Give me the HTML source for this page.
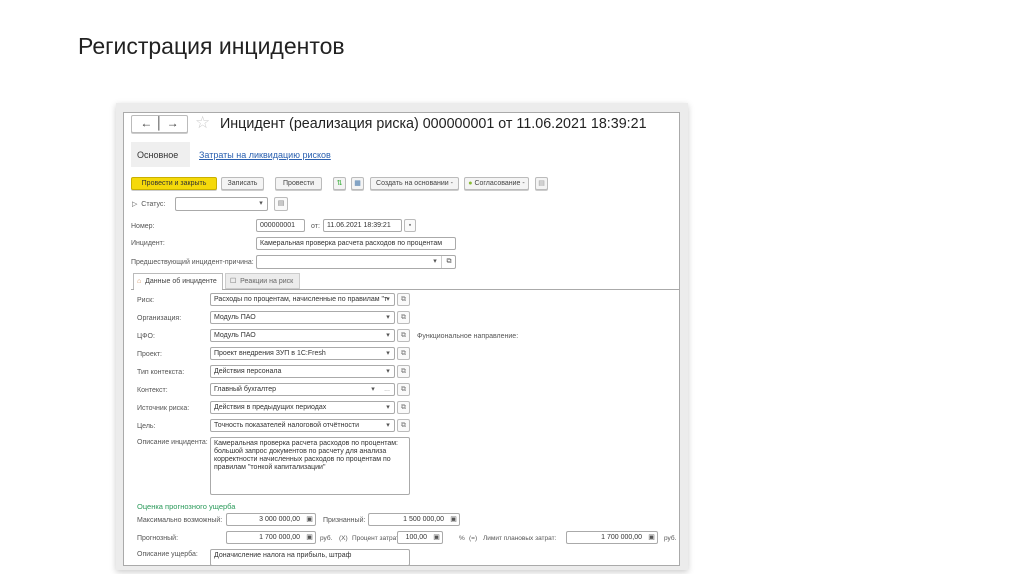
<!DOCTYPE html>
<html><head><meta charset="utf-8"><style>
*{box-sizing:border-box;margin:0;padding:0}
body{width:1024px;height:574px;background:#fff;position:relative;overflow:hidden;font-family:"Liberation Sans",sans-serif;color:#444}
.a{position:absolute;white-space:nowrap}
.s{font-size:7px;line-height:9px;color:#555}
.f{position:absolute;border:1px solid #aaa;border-radius:2px;background:#fff;font-size:7px;color:#333;padding:2px 3px;line-height:8px;white-space:nowrap;overflow:hidden}
.b{position:absolute;border:1px solid #bbb;border-radius:2px;background:#f4f4f4;font-size:7px;color:#444;text-align:center;line-height:11px;white-space:nowrap;box-shadow:0 1px 0 #ccc}
.dd{position:absolute;font-size:7px;color:#555;line-height:11px;text-align:center}
.ib{position:absolute;border:1px solid #bbb;border-radius:2px;background:#fafafa;font-size:7px;color:#777;text-align:center;line-height:11px}
</style></head><body>
<div class="a" style="left:78px;top:33px;font-size:23px;color:#222">Регистрация инцидентов</div>

<div class="a" style="left:116px;top:103px;width:572px;height:467px;background:#ececec;box-shadow:0 2px 6px #ccc"></div>
<div class="a" style="left:123px;top:112px;width:557px;height:454px;background:#fff;border:1px solid #aaa"></div>

<div class="b" style="left:131px;top:115px;width:57px;height:18px;background:#fff;font-size:12px;line-height:15px;color:#333">←&nbsp;│&nbsp;→</div>
<div class="a" style="left:195px;top:113px;font-size:17px;color:#ccc">☆</div>
<div class="a" style="left:220px;top:116px;font-size:14.3px;color:#222">Инцидент (реализация риска) 000000001 от 11.06.2021 18:39:21</div>

<div class="a" style="left:131px;top:142px;width:59px;height:25px;background:#efefef"></div>
<div class="a" style="left:137px;top:150px;font-size:9px;color:#333">Основное</div>
<div class="a" style="left:199px;top:150px;font-size:9px;color:#2a60b0;text-decoration:underline">Затраты на ликвидацию рисков</div>

<div class="b" style="left:131px;top:177px;width:86px;height:13px;background:#f5d90a;border-color:#c9b000;color:#333">Провести и закрыть</div>
<div class="b" style="left:221px;top:177px;width:43px;height:13px">Записать</div>
<div class="b" style="left:275px;top:177px;width:47px;height:13px">Провести</div>
<div class="b" style="left:333px;top:177px;width:13px;height:13px;color:#3a3">⇅</div>
<div class="b" style="left:351px;top:177px;width:13px;height:13px;color:#47a">▦</div>
<div class="b" style="left:370px;top:177px;width:89px;height:13px">Создать на основании -</div>
<div class="b" style="left:464px;top:177px;width:65px;height:13px"><span style="color:#8b3">●</span> Согласование -</div>
<div class="b" style="left:535px;top:177px;width:13px;height:13px;color:#999">▤</div>

<div class="a s" style="left:132px;top:200px">▷&nbsp; Статус:</div>
<div class="f" style="left:175px;top:197px;width:93px;height:14px"></div>
<div class="dd" style="left:256px;top:198px;width:10px">▾</div>
<div class="ib" style="left:274px;top:197px;width:14px;height:14px">▤</div>

<div class="a s" style="left:131px;top:222px">Номер:</div>
<div class="f" style="left:256px;top:219px;width:49px;height:13px">000000001</div>
<div class="a s" style="left:311px;top:222px">от:</div>
<div class="f" style="left:323px;top:219px;width:79px;height:13px">11.06.2021 18:39:21</div>
<div class="ib" style="left:404px;top:219px;width:12px;height:13px">▪</div>

<div class="a s" style="left:131px;top:239px">Инцидент:</div>
<div class="f" style="left:256px;top:237px;width:200px;height:13px">Камеральная проверка расчета расходов по процентам</div>

<div class="a s" style="left:131px;top:258px">Предшествующий инцидент-причина:</div>
<div class="f" style="left:256px;top:255px;width:200px;height:14px"></div>
<div class="dd" style="left:430px;top:256px;width:10px">▾</div>
<div class="a" style="left:441px;top:256px;width:1px;height:12px;background:#ccc"></div>
<div class="dd" style="left:443px;top:256px;width:12px">⧉</div>

<div class="a" style="left:133px;top:273px;width:90px;height:17px;background:#fff;border:1px solid #bbb;border-bottom:none"></div>
<div class="a s" style="left:137px;top:277px;color:#444"><span style="color:#c85">⌂</span>&nbsp; Данные об инциденте</div>
<div class="a" style="left:225px;top:273px;width:75px;height:16px;background:#ececec;border:1px solid #ccc"></div>
<div class="a s" style="left:230px;top:277px;color:#666">☐&nbsp; Реакции на риск</div>
<div class="a" style="left:131px;top:289px;width:549px;height:1px;background:#aaa"></div>
<div class="a" style="left:134px;top:289px;width:88px;height:1px;background:#fff"></div>

<div class="a s" style="left:137px;top:296px">Риск:</div>
<div class="f" style="left:210px;top:293px;width:185px;height:13px;padding-right:14px">Расходы по процентам, начисленные по правилам "т</div>
<div class="dd" style="left:383px;top:294px;width:10px">▾</div>
<div class="ib" style="left:397px;top:293px;width:13px;height:13px">⧉</div>

<div class="a s" style="left:137px;top:314px">Организация:</div>
<div class="f" style="left:210px;top:311px;width:185px;height:13px">Модуль ПАО</div>
<div class="dd" style="left:383px;top:312px;width:10px">▾</div>
<div class="ib" style="left:397px;top:311px;width:13px;height:13px">⧉</div>

<div class="a s" style="left:137px;top:332px">ЦФО:</div>
<div class="f" style="left:210px;top:329px;width:185px;height:13px">Модуль ПАО</div>
<div class="dd" style="left:383px;top:330px;width:10px">▾</div>
<div class="ib" style="left:397px;top:329px;width:13px;height:13px">⧉</div>
<div class="a s" style="left:417px;top:332px">Функциональное направление:</div>

<div class="a s" style="left:137px;top:350px">Проект:</div>
<div class="f" style="left:210px;top:347px;width:185px;height:13px">Проект внедрения ЗУП в 1С:Fresh</div>
<div class="dd" style="left:383px;top:348px;width:10px">▾</div>
<div class="ib" style="left:397px;top:347px;width:13px;height:13px">⧉</div>

<div class="a s" style="left:137px;top:368px">Тип контекста:</div>
<div class="f" style="left:210px;top:365px;width:185px;height:13px">Действия персонала</div>
<div class="dd" style="left:383px;top:366px;width:10px">▾</div>
<div class="ib" style="left:397px;top:365px;width:13px;height:13px">⧉</div>

<div class="a s" style="left:137px;top:386px">Контекст:</div>
<div class="f" style="left:210px;top:383px;width:185px;height:13px">Главный бухгалтер</div>
<div class="dd" style="left:368px;top:384px;width:10px">▾</div>
<div class="dd" style="left:381px;top:384px;width:12px;color:#999">...</div>
<div class="ib" style="left:397px;top:383px;width:13px;height:13px">⧉</div>

<div class="a s" style="left:137px;top:404px">Источник риска:</div>
<div class="f" style="left:210px;top:401px;width:185px;height:13px">Действия в предыдущих периодах</div>
<div class="dd" style="left:383px;top:402px;width:10px">▾</div>
<div class="ib" style="left:397px;top:401px;width:13px;height:13px">⧉</div>

<div class="a s" style="left:137px;top:422px">Цель:</div>
<div class="f" style="left:210px;top:419px;width:185px;height:13px">Точность показателей налоговой отчётности</div>
<div class="dd" style="left:383px;top:420px;width:10px">▾</div>
<div class="ib" style="left:397px;top:419px;width:13px;height:13px">⧉</div>

<div class="a s" style="left:137px;top:438px">Описание инцидента:</div>
<div class="f" style="left:210px;top:437px;width:200px;height:58px;white-space:normal;line-height:8px">Камеральная проверка расчета расходов по процентам: большой запрос документов по расчету для анализа корректности начисленных расходов по процентам по правилам "тонкой капитализации"</div>

<div class="a" style="left:137px;top:502px;font-size:7.5px;color:#2a9a5a">Оценка прогнозного ущерба</div>

<div class="a s" style="left:137px;top:516px">Максимально возможный:</div>
<div class="f" style="left:226px;top:513px;width:90px;height:13px;text-align:right;padding-right:15px">3 000 000,00</div>
<div class="dd" style="left:304px;top:514px;width:11px">▣</div>
<div class="a s" style="left:323px;top:516px">Признанный:</div>
<div class="f" style="left:368px;top:513px;width:92px;height:13px;text-align:right;padding-right:15px">1 500 000,00</div>
<div class="dd" style="left:448px;top:514px;width:11px">▣</div>

<div class="a s" style="left:137px;top:534px">Прогнозный:</div>
<div class="f" style="left:226px;top:531px;width:90px;height:13px;text-align:right;padding-right:15px">1 700 000,00</div>
<div class="dd" style="left:304px;top:532px;width:11px">▣</div>
<div class="a s" style="left:320px;top:534px;font-size:6.5px">руб.</div>
<div class="a s" style="left:339px;top:534px;font-size:6.5px">(X)</div>
<div class="a s" style="left:352px;top:534px;font-size:6.5px">Процент затрат:</div>
<div class="f" style="left:397px;top:531px;width:46px;height:13px;text-align:right;padding-right:15px">100,00</div>
<div class="dd" style="left:431px;top:532px;width:11px">▣</div>
<div class="a s" style="left:459px;top:534px;font-size:6.5px">%</div>
<div class="a s" style="left:469px;top:534px;font-size:6.5px">(=)</div>
<div class="a s" style="left:483px;top:534px;font-size:6.5px">Лимит плановых затрат:</div>
<div class="f" style="left:566px;top:531px;width:92px;height:13px;text-align:right;padding-right:15px">1 700 000,00</div>
<div class="dd" style="left:646px;top:532px;width:11px">▣</div>
<div class="a s" style="left:664px;top:534px;font-size:6.5px">руб.</div>

<div class="a s" style="left:137px;top:550px">Описание ущерба:</div>
<div class="f" style="left:210px;top:549px;width:200px;height:17px">Доначисление налога на прибыль, штраф</div>
</body></html>
